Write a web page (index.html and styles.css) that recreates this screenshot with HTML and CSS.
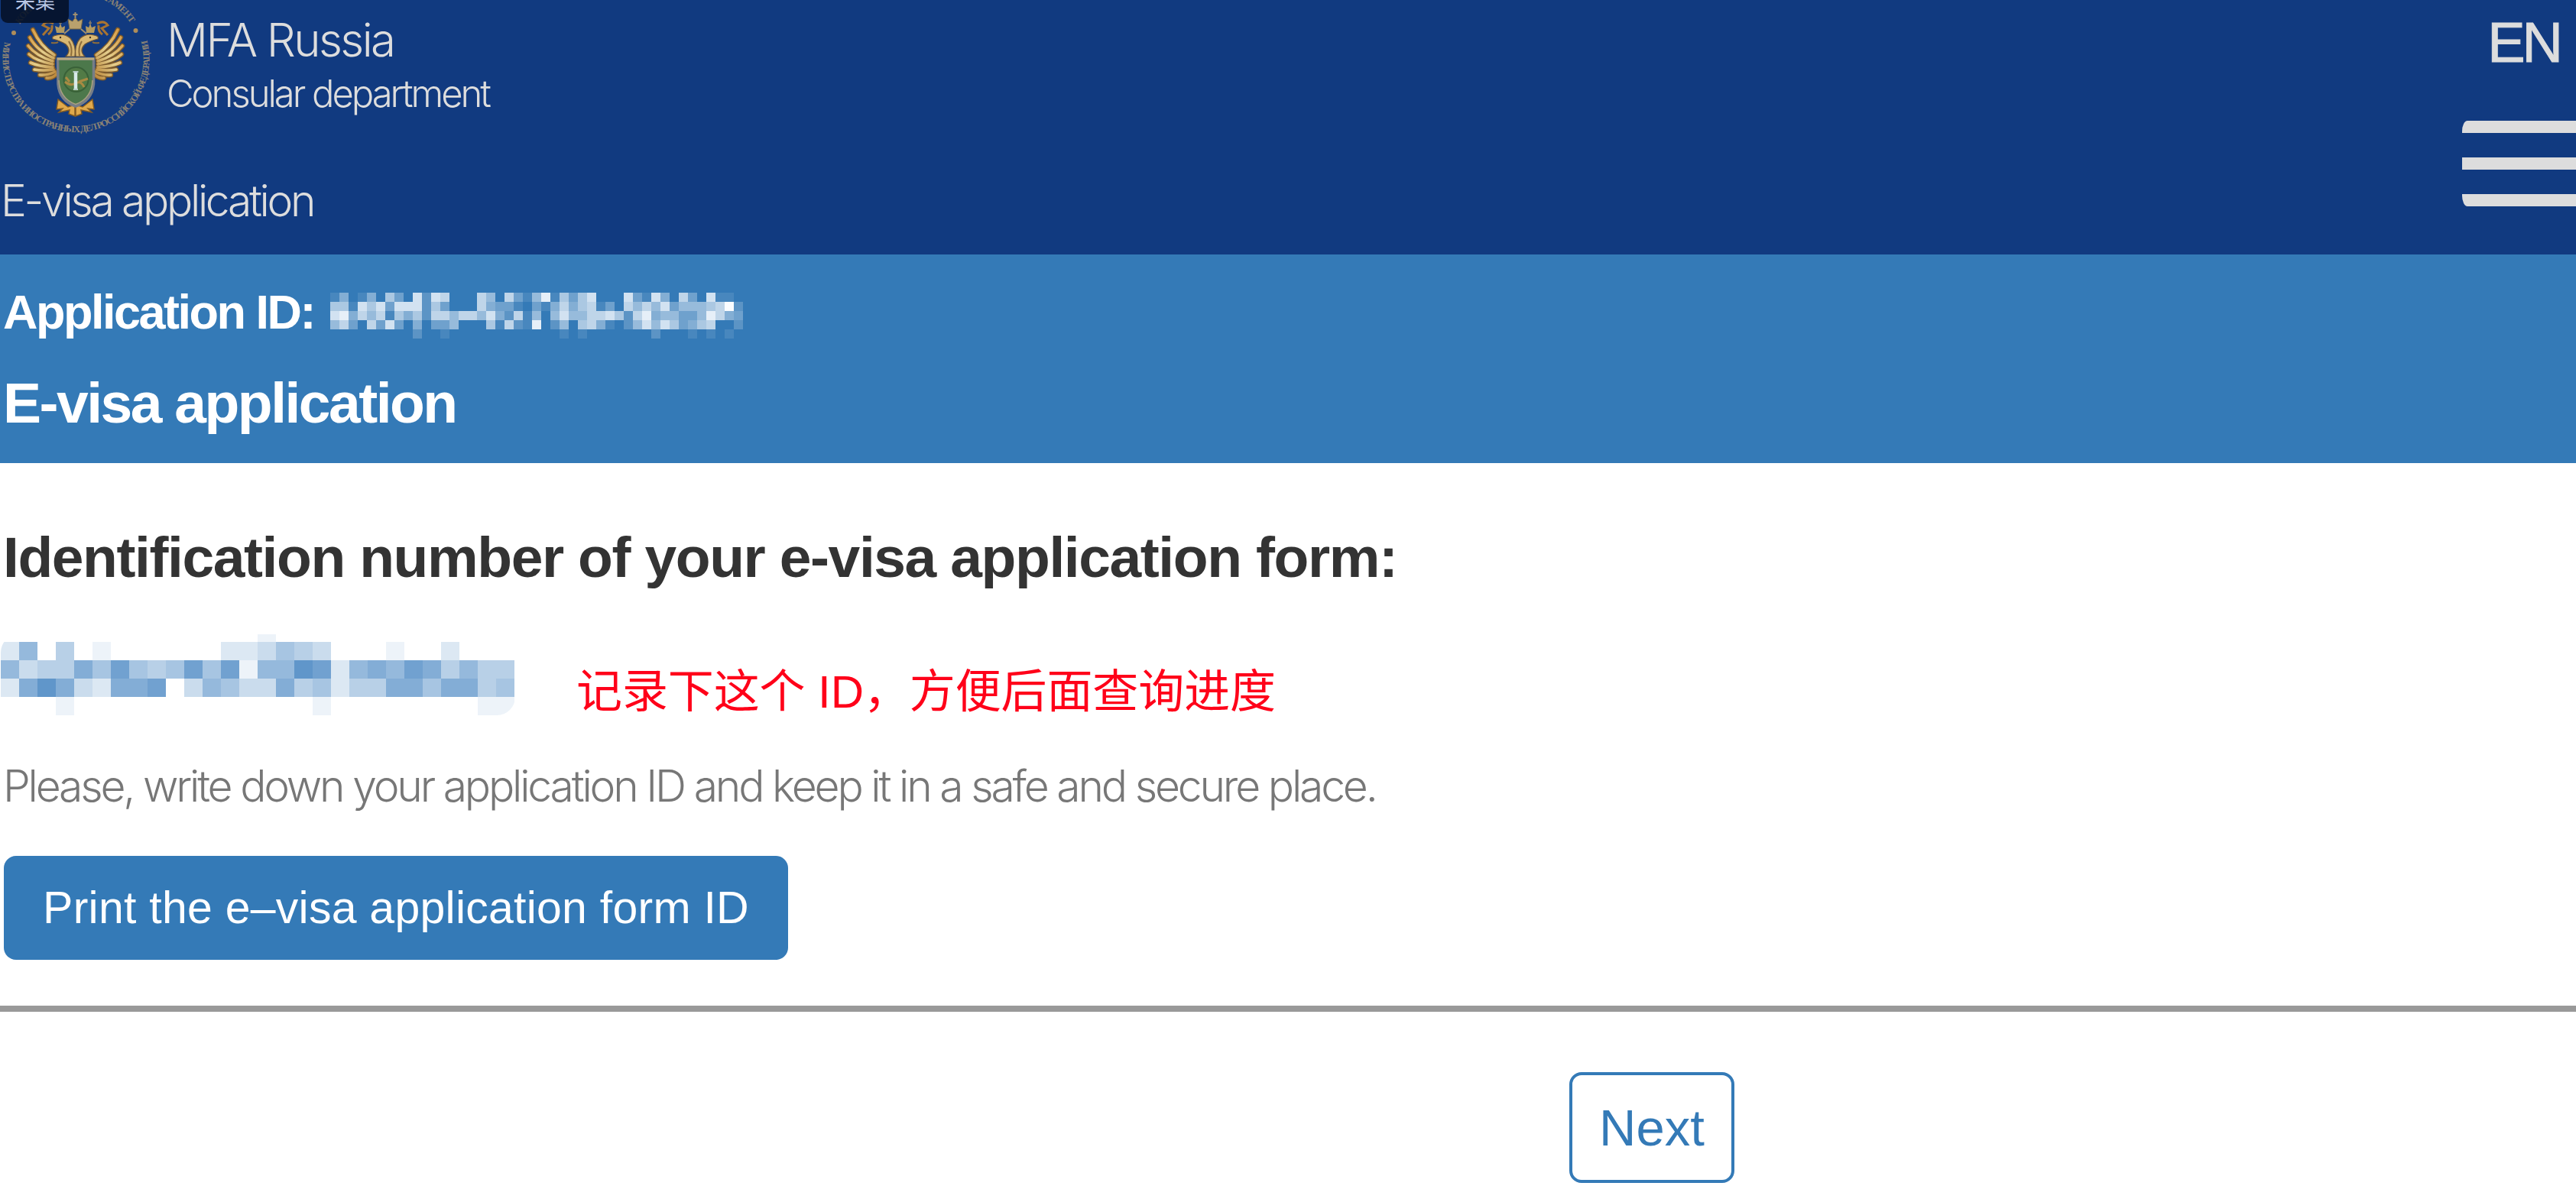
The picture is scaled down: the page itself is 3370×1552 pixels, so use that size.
FILE: index.html
```
<!DOCTYPE html>
<html lang="en">
<head>
<meta charset="utf-8">
<title>E-visa application</title>
<link rel="stylesheet" href="styles.css">
</head>
<body>
<header class="header">
  <div class="brand-column">
    <div class="brand">
      <svg class="emblem" viewBox="0 0 198 180" aria-hidden="true">
        <defs>
          <path id="ring-bottom" d="M6 55A96 96 0 1 0 191 48"/>
          <path id="ring-top" d="M26 32A86 86 0 0 1 173 34"/>
          <linearGradient id="gold" x1="0" y1="0" x2="1" y2="1">
            <stop offset="0" stop-color="#d9963a"/><stop offset=".5" stop-color="#e3cd8c"/><stop offset="1" stop-color="#b98335"/>
          </linearGradient>
          <g id="wing" fill="none" stroke-linecap="round">
            <g stroke="#7c5a2c" stroke-width="6.5">
              <path d="M71 72Q53 61 43 39M70 76Q48 66 39 49M69 80Q47 73 37 60M69 84Q48 80 38 71M69 88Q51 87 40 82M70 91Q56 93 45 91M72 94Q62 99 52 98M74 97Q68 103 61 102"/>
            </g>
            <g stroke="url(#gold)" stroke-width="3.6">
              <path d="M71 72Q53 61 43 39M70 76Q48 66 39 49M69 80Q47 73 37 60M69 84Q48 80 38 71M69 88Q51 87 40 82M70 91Q56 93 45 91M72 94Q62 99 52 98M74 97Q68 103 61 102"/>
            </g>
          </g>
          <g id="head">
            <path d="M86 74Q94 66 86 58Q80 54 69 51Q67 47 74 46Q84 43 92 50Q100 59 98 74Z" fill="#d9b873" stroke="#6f5636" stroke-width="1.2"/>
            <path d="M76 55Q74 57 67 56M90 54Q95 62 93 73" fill="none" stroke="#8d6d3c" stroke-width="2"/>
            <circle cx="79" cy="49" r="1.2" fill="#3e3428"/>
            <path d="M74 43L72 34L77 36L79 31L81 36L85 34L84 43Z" fill="#b29a61"/>
            <path d="M79 27V33M77 30H81" stroke="#887d68" stroke-width="1.5"/>
            <path d="M70 31Q61 26 56 33L64 37L56 46M68 33Q69 41 63 45" fill="none" stroke="#a87431" stroke-width="3"/>
          </g>
          <path id="tail" d="M98 137L89 140L76 130L74 143L82 142L77 147L91 144L90 149L98 152Z" fill="#e0a94b" stroke="#855c22" stroke-width="1.5"/>
        </defs>
        <g class="ring-text">
          <text><textPath href="#ring-bottom" textLength="348" lengthAdjust="spacing">МИНИСТЕРСТВА ИНОСТРАННЫХ ДЕЛ РОССИЙСКОЙ ФЕДЕРАЦИИ</textPath></text>
          <text><textPath href="#ring-top" textLength="172" lengthAdjust="spacing">КОНСУЛЬСКИЙ ДЕПАРТАМЕНТ</textPath></text>
        </g>
        <circle cx="18" cy="43" r="3" fill="#ae8d5a"/><circle cx="177.500" cy="40" r="3" fill="#ae8d5a"/>
        <use href="#wing"/><use href="#wing" transform="translate(197 0) scale(-1 1)"/>
        <use href="#tail"/><use href="#tail" transform="translate(197 0) scale(-1 1)"/>
        <use href="#head"/><use href="#head" transform="translate(197 0) scale(-1 1)"/>
        <path d="M91 38L89 25L95 28Q98.500 20 102 28L108 25L106 38Z" fill="#b9a16d" stroke="#756647"/>
        <path d="M98.500 16V24M95.500 19H101.500M91 38L84 44M106 38L113 44" fill="none" stroke="#a08f70" stroke-width="2"/>
        <path d="M75.500 77H122.500V110Q120 132 99 139Q78 132 76 110Z" fill="#4c784b" stroke="#777d86" stroke-width="3.500"/>
        <path d="M75 77H123" stroke="#bba980" stroke-width="3"/>
        <path d="M77 105Q78 129 99 136.500Q120 129 121 105" fill="none" stroke="#aaa181" stroke-width="1.500"/>
        <circle cx="99.500" cy="104" r="16" fill="#527b46" stroke="#396138" stroke-width="2"/>
        <path d="M85 107Q92 113 99 109T110 114M86 101L91 107M103 107L115 103" fill="none" stroke="#a98a42" stroke-width="3"/>
        <path d="M99 93V118" stroke="#d9eae9" stroke-width="4.500"/><path d="M95.500 94H102.500M96 117H102" stroke="#b8ceca" stroke-width="2"/>
      </svg>
      <div class="brand-text">
        <div class="brand-name">MFA Russia</div>
        <div class="brand-unit">Consular department</div>
      </div>
    </div>
    <div class="section-name">E-visa application</div>
  </div>
  <div class="tools">
    <span class="language">EN</span>
    <div class="menu"><i class="bar"></i><i class="bar"></i><i class="bar"></i></div>
  </div>
  <div class="tag"><span class="tag-text">采集</span></div>
</header>
<section class="band">
  <div class="app-line">
    <span class="app-id">Application ID:</span>
    <svg class="masked masked-light" data-base="52,122,183" data-tone="250,252,255" data-w="12" data-h="12"
      data-rows="000000000000000000000000000000000000000000000 140140630828700075073159163680008318407308110 6618683888263000743310314746713075758355567A2 894757164627757758427150585577862794553359743 573073830403350006172190250674102585863467002 000000000200100000000000010100000002000101010"></svg>
  </div>
  <h1 class="band-title">E-visa application</h1>
</section>
<main class="content">
  <h2 class="content-title">Identification number of your e-visa application form:</h2>
  <div class="id-row">
    <svg class="masked masked-dark" viewBox="0 14 673 106" data-base="255,255,255" data-tone="78,138,196" data-w="24" data-h="24"
      data-rows="0000000000000010000000000000 2604010000002235430001002000 6344758545858166982676874644 2797327780365337452447757745 0001000000000000010000000011"></svg>
    <span class="note">记录下这个 ID，方便后面查询进度</span>
  </div>
  <p class="advice">Please, write down your application ID and keep it in a safe and secure place.</p>
  <button class="print">Print the e–visa application form ID</button>
</main>
<footer class="footer"><button class="next">Next</button></footer>
<script src="masks.js"></script>
</body>
</html>
```
FILE: masks.js
```
// Fills each masked value with blocks; a digit is the strength of the tone (A is the full tone).
document.querySelectorAll('.masked').forEach(function (svg) {
  const base = svg.dataset.base.split(',').map(Number);
  const tone = svg.dataset.tone.split(',').map(Number);
  const w = +svg.dataset.w, h = +svg.dataset.h;
  svg.dataset.rows.split(' ').forEach(function (row, y) {
    [...row].forEach(function (level, x) {
      if (level === '0') return;
      const t = parseInt(level, 16) / 10;
      const rect = document.createElementNS('http://www.w3.org/2000/svg', 'rect');
      rect.setAttribute('x', x * w);
      rect.setAttribute('y', y * h);
      rect.setAttribute('width', w);
      rect.setAttribute('height', h);
      rect.setAttribute('fill', 'rgb(' + base.map((b, i) => Math.round(b + (tone[i] - b) * t)) + ')');
      svg.appendChild(rect);
    });
  });
});
```
FILE: styles.css
```
* { box-sizing: border-box; }
body { margin: 0; background: #fff; font-family: "Liberation Sans", "Noto Sans CJK SC", sans-serif; white-space: nowrap; }
h1, h2, p { margin: 0; }

.header { position: relative; display: flex; justify-content: space-between; height: 333px; background: #113a80; color: #ddd; overflow: hidden; }
.brand { display: flex; height: 228px; }
.emblem { flex: none; width: 198px; height: 180px; }
.ring-text { font: 700 12px "Liberation Serif", serif; fill: #8b8375; }
.brand-text { padding: 17px 0 0 20px; }
.brand-name, .brand-unit, .section-name { font-family: Inter, sans-serif; font-weight: 300; }
.brand-name { font-size: 60px; line-height: 70px; letter-spacing: -2.6px; }
.brand-unit { margin-top: 7px; font-size: 49px; line-height: 58px; letter-spacing: -3.05px; }
.section-name { padding-left: 1px; font-size: 57px; line-height: 70px; letter-spacing: -3.35px; }

.tools { display: flex; flex-direction: column; align-items: flex-end; }
.language { padding: 11px 21px 0 0; font-size: 74px; line-height: 90px; letter-spacing: -4px; -webkit-text-stroke: 1px #ddd; }
.menu { display: flex; flex-direction: column; gap: 32px; width: 149px; margin-top: 57px; }
.bar { height: 16px; background: #ddd; }
.bar:first-child { border-top-left-radius: 7px 14px; }
.bar:last-child { border-bottom-left-radius: 7px 14px; }
.tag { position: absolute; left: 1px; top: -20px; width: 89px; height: 50px; border-radius: 9px; background: rgba(5, 18, 40, .9); color: #b9c6e4; }
.tag-text { display: block; padding-left: 19px; font-size: 26px; line-height: 44px; }

.band { height: 273px; padding: 37px 4px 0 4px; background: #347ab7; color: #fff; }
.app-line { display: flex; height: 76px; }
.app-id { width: 428px; font-size: 63px; font-weight: 700; line-height: 76px; letter-spacing: -2.5px; }
.masked { flex: none; }
.masked-light { width: 540px; height: 72px; margin-top: 1px; }
.band-title { margin-top: 36px; font-size: 75px; font-weight: 700; line-height: 90px; letter-spacing: -2.5px; }

.content { height: 718px; padding: 78px 0 0 4px; border-bottom: 8px solid #999; }
.content-title { color: #333; font-size: 75px; font-weight: 700; line-height: 90px; letter-spacing: -1.42px; }
.id-row { display: flex; height: 220px; }
.masked-dark { width: 673px; height: 106px; margin: 56px 0 0 -3px; border-radius: 24px; }
.note { margin: 87px 0 0 80px; font-size: 60px; line-height: 90px; letter-spacing: -.1px; color: #ff0019; }
.advice { color: #777; font-family: Inter, sans-serif; font-size: 57px; font-weight: 300; line-height: 70px; letter-spacing: -3.2px; }
button { font-family: inherit; margin: 0; border: 0; padding: 0; }
.print { display: block; width: 1026px; height: 136px; margin: 56px 0 0 1px; border-radius: 16px; background: #347ab7; color: #fff; font-size: 59px; letter-spacing: .25px; }
.footer { display: flex; padding: 79px 0 0 2053px; }
.next { width: 216px; height: 145px; border: 4px solid #347ab7; border-radius: 16px; background: #fff; color: #347ab7; font-size: 67px; }
```
